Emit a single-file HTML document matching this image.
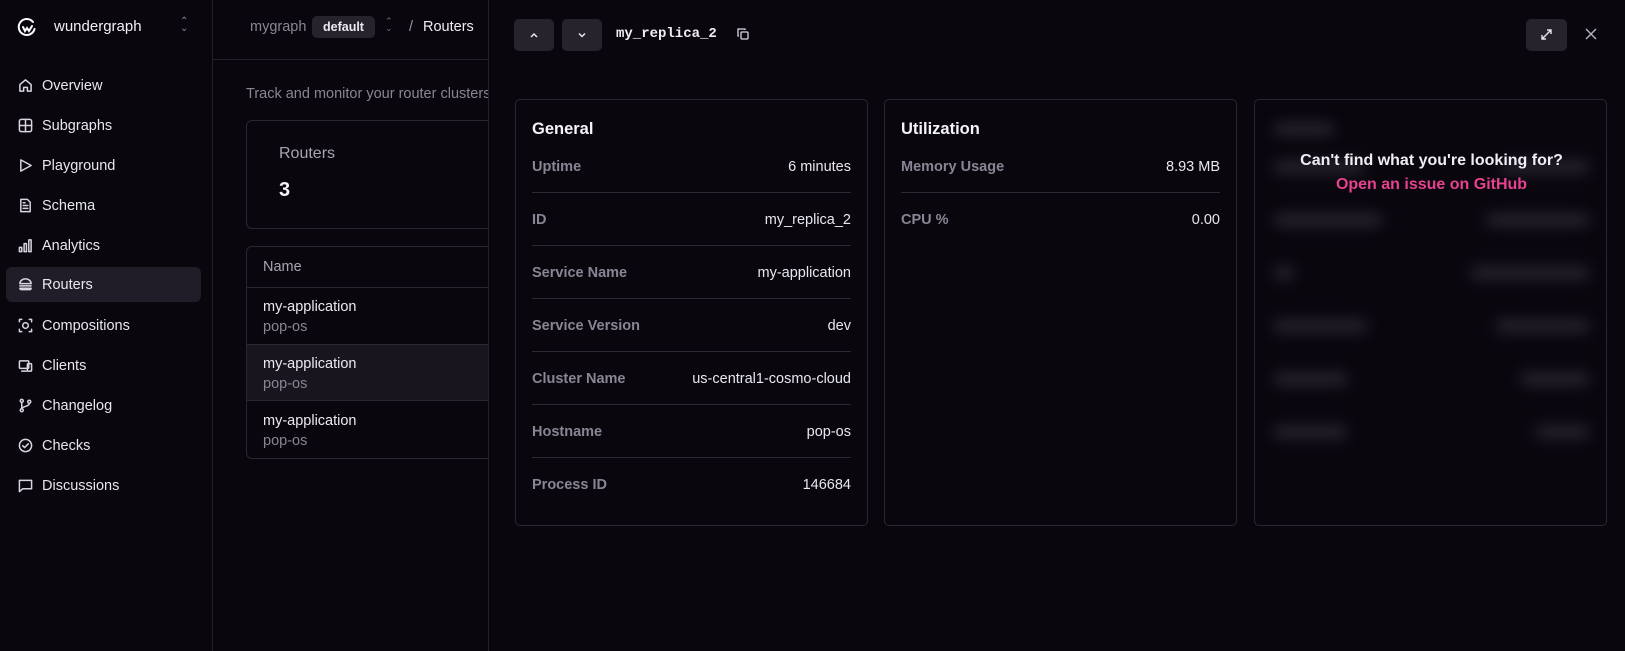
<!DOCTYPE html>
<html><head><meta charset="utf-8"><style>
*{box-sizing:border-box;margin:0;padding:0}
body{width:1625px;height:651px;overflow:hidden;background:#09060e;font-family:"Liberation Sans",sans-serif;color:#eceaf0;position:relative}
.abs{position:absolute}
.side{left:0;top:0;width:213px;height:651px;border-right:1px solid #24212b}
.nav{position:absolute;left:6px;width:195px;height:35px;border-radius:6px;font-size:14.5px;display:flex;align-items:center;padding-left:36px;color:#e9e7ee}
.nav svg{position:absolute;left:12px;top:10px;width:15px;height:15px;fill:none;stroke:#d8d5de;stroke-width:1.6;stroke-linecap:round;stroke-linejoin:round}
.nav.act{background:#201d28}
.mid{left:213px;top:0;width:276px;height:651px;border-right:1px solid #24212b;overflow:hidden}
.sheet{left:490px;top:0;width:1135px;height:651px;background:#09060e}
.btn{position:absolute;top:19px;width:40px;height:32px;background:#26232d;border-radius:5px}
.card{position:absolute;top:99px;height:427px;border:1px solid #2a2731;border-radius:5px}
.card h3{position:absolute;left:16px;top:20px;font-size:16.5px;font-weight:bold;color:#f5f4f7}
.row{position:absolute;left:16px;right:16px;height:53px;border-bottom:1px solid #2c2933;font-size:14.5px}
.row .l{position:absolute;left:0;top:19px;color:#8a8594;font-weight:bold}
.row .r{position:absolute;right:0;top:19px;color:#e9e7ee}
.row.last{border-bottom:none}
.blob{position:absolute;height:14px;background:#3a3542;border-radius:7px;filter:blur(7px);opacity:.6}
</style></head><body>
<div class="abs side">
  <svg class="abs" style="left:17px;top:17px" width="20" height="20" viewBox="0 0 20 20" fill="none" stroke="#fff" stroke-width="2" stroke-linecap="round"><path d="M16 5A8 8 0 1 0 17.5 12"/><path d="M6 10l2 4 2-3 2 3 3-5"/></svg>
  <div class="abs" style="left:54px;top:18px;font-size:15px;color:#f2f0f5">wundergraph</div>
  <div class="abs" style="left:180px;top:18px;font-size:10px;color:#8a8594;line-height:7px">⌃<br>⌄</div>
  <div class="nav" style="top:68px"><svg viewBox="0 0 16 16"><path d="M2 7l6-5 6 5v7H10V10H6v4H2z"/></svg>Overview</div>
  <div class="nav" style="top:108px"><svg viewBox="0 0 16 16"><rect x="1.5" y="1.5" width="13" height="13" rx="2"/><path d="M8 1.5v13M1.5 8h13"/></svg>Subgraphs</div>
  <div class="nav" style="top:148px"><svg viewBox="0 0 16 16"><path d="M3 2l11 6-11 6z"/></svg>Playground</div>
  <div class="nav" style="top:188px"><svg viewBox="0 0 16 16"><path d="M3 1.5h7l3 3v10H3z"/><path d="M5.5 8h5M5.5 11h5M5.5 5h2"/></svg>Schema</div>
  <div class="nav" style="top:228px"><svg viewBox="0 0 16 16"><rect x="1.5" y="10" width="2.5" height="4.5"/><rect x="6.5" y="6" width="2.5" height="8.5"/><rect x="11.5" y="2" width="2.5" height="12.5"/></svg>Analytics</div>
  <div class="nav act" style="top:267px"><svg viewBox="0 0 16 16"><path d="M2 7a6 5 0 0 1 12 0zM2 9.5h12M2 12a1.5 1.5 0 0 0 1.5 1.5h9A1.5 1.5 0 0 0 14 12z"/></svg>Routers</div>
  <div class="nav" style="top:308px"><svg viewBox="0 0 16 16"><path d="M1.5 4V1.5H4M12 1.5h2.5V4M14.5 12v2.5H12M4 14.5H1.5V12"/><circle cx="8" cy="8" r="3"/></svg>Compositions</div>
  <div class="nav" style="top:348px"><svg viewBox="0 0 16 16"><rect x="1.5" y="3" width="10" height="8" rx="1"/><rect x="10" y="6" width="4.5" height="8" rx="1"/><path d="M4 14h5"/></svg>Clients</div>
  <div class="nav" style="top:388px"><svg viewBox="0 0 16 16"><circle cx="4" cy="13" r="1.6"/><circle cx="4" cy="3" r="1.6"/><circle cx="12" cy="4" r="1.6"/><path d="M4 4.6v6.8M12 5.6c0 4-8 3-8 6"/></svg>Changelog</div>
  <div class="nav" style="top:428px"><svg viewBox="0 0 16 16"><circle cx="8" cy="8" r="6.5"/><path d="M5 8.2l2 2 4-4"/></svg>Checks</div>
  <div class="nav" style="top:468px"><svg viewBox="0 0 16 16"><path d="M1.5 2.5h13v9H5l-3.5 3z"/></svg>Discussions</div>
</div>
<div class="abs mid">
  <div class="abs" style="left:0;top:59px;width:276px;border-top:1px solid #24212b"></div>
  <div class="abs" style="left:37px;top:19px;font-size:14.5px;color:#8a8594">mygraph</div>
  <div class="abs" style="left:99px;top:16px;width:63px;height:22px;background:#26232d;border-radius:5px;font-size:12.5px;font-weight:bold;text-align:center;line-height:22px;color:#eceaf0">default</div>
  <div class="abs" style="left:172px;top:18px;font-size:9px;color:#77727f;line-height:7px">⌃<br>⌄</div>
  <div class="abs" style="left:196px;top:19px;font-size:14.5px;color:#9a96a2">/</div>
  <div class="abs" style="left:210px;top:19px;font-size:14.5px;color:#f0eef3">Routers</div>
  <div class="abs" style="left:33px;top:86px;font-size:14.5px;color:#8a8594;white-space:nowrap">Track and monitor your router clusters</div>
  <div class="abs" style="left:33px;top:120px;width:280px;height:109px;border:1px solid #2a2731;border-radius:6px">
    <div class="abs" style="left:32px;top:24px;font-size:16px;color:#a9a5b0">Routers</div>
    <div class="abs" style="left:32px;top:58px;font-size:20px;font-weight:bold;color:#f5f4f7">3</div>
  </div>
  <div class="abs" style="left:33px;top:246px;width:280px;height:213px;border:1px solid #2a2731;border-radius:6px;overflow:hidden">
    <div class="abs" style="left:16px;top:12px;font-size:14.5px;color:#a9a5b0">Name</div>
    <div class="abs" style="left:0;top:40px;width:280px;border-top:1px solid #2a2731"></div>
    <div class="abs" style="left:16px;top:50px;font-size:14.5px;line-height:20px">my-application<br><span style="color:#8a8594">pop-os</span></div>
    <div class="abs" style="left:0;top:97px;width:280px;height:57px;background:#18151e;border-top:1px solid #2a2731;border-bottom:1px solid #2a2731"></div>
    <div class="abs" style="left:16px;top:107px;font-size:14.5px;line-height:20px">my-application<br><span style="color:#8a8594">pop-os</span></div>
    <div class="abs" style="left:16px;top:164px;font-size:14.5px;line-height:20px">my-application<br><span style="color:#8a8594">pop-os</span></div>
  </div>
</div>
<div class="abs sheet">
  <div class="btn" style="left:24px"><svg width="40" height="32" viewBox="0 0 40 32" fill="none" stroke="#e8e6ec" stroke-width="1.5"><path d="M17 18l3-3 3 3"/></svg></div>
  <div class="btn" style="left:72px"><svg width="40" height="32" viewBox="0 0 40 32" fill="none" stroke="#e8e6ec" stroke-width="1.5"><path d="M17 14.5l3 3 3-3"/></svg></div>
  <div class="abs" style="left:126px;top:26px;font-family:'Liberation Mono',monospace;font-size:14px;font-weight:bold;color:#f0eef3">my_replica_2</div>
  <svg class="abs" style="left:247px;top:28px" width="12" height="12" viewBox="0 0 12 12" fill="none" stroke="#d8d5de" stroke-width="1.3"><rect x="4" y="4" width="7" height="7" rx="1"/><path d="M2 8H1V1h7v1"/></svg>
  <div class="abs" style="left:1036px;top:19px;width:41px;height:32px;background:#26232d;border-radius:5px"><svg width="41" height="32" viewBox="0 0 41 32" fill="none" stroke="#e8e6ec" stroke-width="1.4"><path d="M16 20l9-9M21 11h4v4M16 16v4h4"/></svg></div>
  <svg class="abs" style="left:1095px;top:28px" width="12" height="12" viewBox="0 0 12 12" stroke="#b8b4be" stroke-width="1.4"><path d="M1 1l10 10M11 1L1 11"/></svg>

  <div class="card" style="left:25px;width:353px">
    <h3>General</h3>
    <div class="row" style="top:40px"><span class="l">Uptime</span><span class="r">6 minutes</span></div>
    <div class="row" style="top:93px"><span class="l">ID</span><span class="r">my_replica_2</span></div>
    <div class="row" style="top:146px"><span class="l">Service Name</span><span class="r">my-application</span></div>
    <div class="row" style="top:199px"><span class="l">Service Version</span><span class="r">dev</span></div>
    <div class="row" style="top:252px"><span class="l">Cluster Name</span><span class="r">us-central1-cosmo-cloud</span></div>
    <div class="row" style="top:305px"><span class="l">Hostname</span><span class="r">pop-os</span></div>
    <div class="row last" style="top:358px"><span class="l">Process ID</span><span class="r">146684</span></div>
  </div>
  <div class="card" style="left:394px;width:353px">
    <h3>Utilization</h3>
    <div class="row" style="top:40px"><span class="l">Memory Usage</span><span class="r">8.93 MB</span></div>
    <div class="row last" style="top:93px"><span class="l">CPU %</span><span class="r">0.00</span></div>
  </div>
  <div class="card" style="left:764px;width:353px;overflow:hidden">
    <div class="blob" style="left:18px;top:22px;width:62px"></div>
    <div class="blob" style="left:18px;top:60px;width:92px"></div><div class="blob" style="left:245px;top:60px;width:90px"></div>
    <div class="blob" style="left:18px;top:113px;width:110px"></div><div class="blob" style="left:230px;top:113px;width:105px"></div>
    <div class="blob" style="left:18px;top:166px;width:22px"></div><div class="blob" style="left:215px;top:166px;width:120px"></div>
    <div class="blob" style="left:18px;top:219px;width:95px"></div><div class="blob" style="left:240px;top:219px;width:95px"></div>
    <div class="blob" style="left:18px;top:272px;width:75px"></div><div class="blob" style="left:265px;top:272px;width:70px"></div>
    <div class="blob" style="left:18px;top:325px;width:75px"></div><div class="blob" style="left:280px;top:325px;width:55px"></div>
    <div class="abs" style="left:0;top:52px;width:353px;text-align:center;font-size:16px;font-weight:bold;color:#f0eef3">Can't find what you're looking for?</div>
    <div class="abs" style="left:0;top:76px;width:353px;text-align:center;font-size:16px;font-weight:bold;color:#e7418f">Open an issue on GitHub</div>
  </div>
</div>
</body></html>
